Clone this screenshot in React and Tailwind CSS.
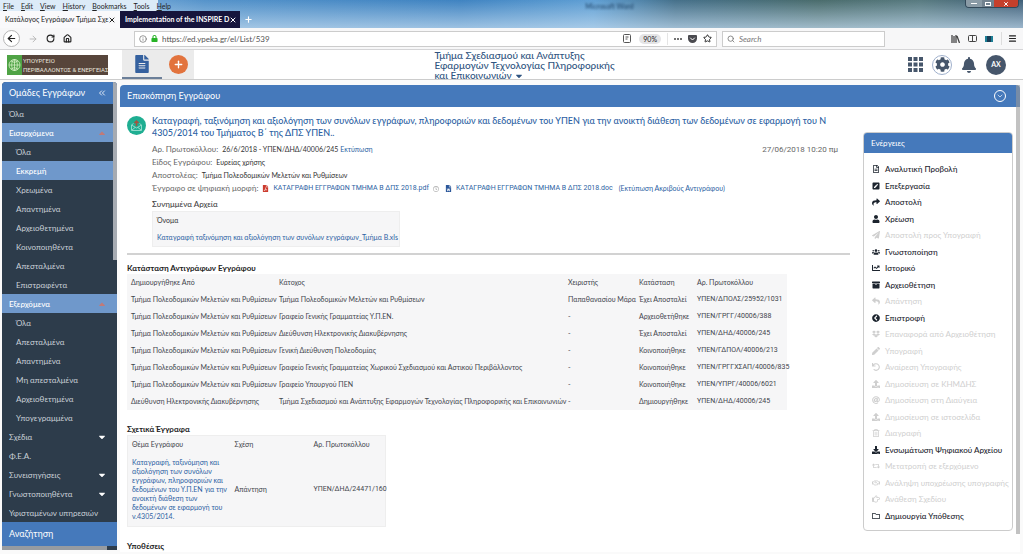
import React, { useState } from "react";
import {
  FaArchive,
  FaBell,
  FaChartLine,
  FaChevronCircleLeft,
  FaCog,
  FaDownload,
  FaDropbox,
  FaFileAlt,
  FaFilePdf,
  FaFileWord,
  FaLock,
  FaPaperPlane,
  FaPen,
  FaPenSquare,
  FaRegClock,
  FaRegFileAlt,
  FaRegFolder,
  FaRegHandPointRight,
  FaRegHandshake,
  FaRegTrashAlt,
  FaReply,
  FaRetweet,
  FaShare,
  FaUndo,
  FaUpload,
  FaUser,
  FaUsers,
  FaAt,
  FaCaretDown,
  FaCaretUp,
} from "react-icons/fa";
import {
  ArrowLeft,
  ArrowRight,
  ChevronsLeft,
  ChevronDown,
  House,
  Info,
  Menu,
  Plus,
  RotateCw,
  Search,
  Star,
  X,
} from "lucide-react";

const menus = ["File", "Edit", "View", "History", "Bookmarks", "Tools", "Help"];

const groups = [
  { label: "Όλα" },
  { label: "Εισερχόμενα", open: true },
  { label: "Όλα", child: true },
  { label: "Εκκρεμή", child: true, active: true },
  { label: "Χρεωμένα", child: true },
  { label: "Απαντημένα", child: true },
  { label: "Αρχειοθετημένα", child: true },
  { label: "Κοινοποιηθέντα", child: true },
  { label: "Απεσταλμένα", child: true },
  { label: "Επιστραφέντα", child: true },
  { label: "Εξερχόμενα", open: true },
  { label: "Όλα", child: true },
  { label: "Απεσταλμένα", child: true },
  { label: "Απαντημένα", child: true },
  { label: "Μη απεσταλμένα", child: true },
  { label: "Αρχειοθετημένα", child: true },
  { label: "Υπογεγραμμένα", child: true },
  { label: "Σχέδια", closed: true },
  { label: "Φ.Ε.Α." },
  { label: "Συνεισηγήσεις", closed: true },
  { label: "Γνωστοποιηθέντα", closed: true },
  { label: "Υφισταμένων υπηρεσιών" },
];

const planning = "Τμήμα Πολεοδομικών Μελετών και Ρυθμίσεων";

const copies = [
  [planning, planning, "Παπαθανασίου Μάρα", "Έχει Αποσταλεί", "ΥΠΕΝ/ΔΠΟΛΣ/25952/1031"],
  [planning, "Γραφείο Γενικής Γραμματείας Υ.Π.ΕΝ.", "-", "Αρχειοθετήθηκε", "ΥΠΕΝ/ΓΡΓΓ/40006/388"],
  [planning, "Διεύθυνση Ηλεκτρονικής Διακυβέρνησης", "-", "Έχει Αποσταλεί", "ΥΠΕΝ/ΔΗΔ/40006/245"],
  [planning, "Γενική Διεύθυνση Πολεοδομίας", "-", "Κοινοποιήθηκε", "ΥΠΕΝ/ΓΔΠΟΛ/40006/213"],
  [planning, "Γραφείο Γενικής Γραμματείας Χωρικού Σχεδιασμού και Αστικού Περιβάλλοντος", "-", "Κοινοποιήθηκε", "ΥΠΕΝ/ΓΡΓΓΧΣΑΠ/40006/835"],
  [planning, "Γραφείο Υπουργού ΠΕΝ", "-", "Κοινοποιήθηκε", "ΥΠΕΝ/ΥΠΡΓ/40006/6021"],
  ["Διεύθυνση Ηλεκτρονικής Διακυβέρνησης", "Τμήμα Σχεδιασμού και Ανάπτυξης Εφαρμογών Τεχνολογίας Πληροφορικής και Επικοινωνιών", "-", "Δημιουργήθηκε", "ΥΠΕΝ/ΔΗΔ/40006/245"],
];

const actions = [
  { label: "Αναλυτική Προβολή", icon: FaRegFileAlt, on: true },
  { label: "Επεξεργασία", icon: FaPenSquare, on: true },
  { label: "Αποστολή", icon: FaShare, on: true },
  { label: "Χρέωση", icon: FaUser, on: true },
  { label: "Αποστολή προς Υπογραφή", icon: FaPaperPlane },
  { label: "Γνωστοποίηση", icon: FaUsers, on: true },
  { label: "Ιστορικό", icon: FaChartLine, on: true },
  { label: "Αρχειοθέτηση", icon: FaArchive, on: true },
  { label: "Απάντηση", icon: FaReply },
  { label: "Επιστροφή", icon: FaChevronCircleLeft, on: true },
  { label: "Επαναφορά από Αρχειοθέτηση", icon: FaDropbox },
  { label: "Υπογραφή", icon: FaPen },
  { label: "Αναίρεση Υπογραφής", icon: FaUndo },
  { label: "Δημοσίευση σε ΚΗΜΔΗΣ", icon: FaUpload },
  { label: "Δημοσίευση στη Διαύγεια", icon: FaAt },
  { label: "Δημοσίευση σε ιστοσελίδα", icon: FaUpload },
  { label: "Διαγραφή", icon: FaRegTrashAlt },
  { label: "Ενσωμάτωση Ψηφιακού Αρχείου", icon: FaDownload, on: true },
  { label: "Μετατροπή σε εξερχόμενο", icon: FaRetweet },
  { label: "Ανάληψη υποχρέωσης υπογραφής", icon: FaRegHandshake },
  { label: "Ανάθεση Σχεδίου", icon: FaRegHandPointRight },
  { label: "Δημιουργία Υπόθεσης", icon: FaRegFolder, on: true },
];

const BrowserChrome = () => {
  const [query, setQuery] = useState("");
  const [url, setUrl] = useState("https://ed.ypeka.gr/el/List/539");

  return (
    <div className="text-[7px] text-[#222]">
      <div className="bg-[linear-gradient(90deg,#a9cdee_0%,#5593ca_20%,#3f83c1_45%,#5f9fd4_58%,#45708a_66%,#4a6c6c_80%,#587a80_90%,#3f5f78_100%)]">
        <div className="bg-linear-to-b from-transparent to-[#c4dcf0]/70">
          <div className="flex h-[11px] items-start justify-between">
            <nav className="flex h-[11px] w-[158px] items-center gap-[7px] bg-[#dcebf8] pl-[3px] leading-[10px] whitespace-nowrap">
              {menus.map((m) => (
                <button key={m}>
                  <u>{m[0]}</u>
                  {m.slice(1)}
                </button>
              ))}
            </nav>
            <span className="pl-24 leading-[12px] text-[#1f4468] blur-[1px]">Microsoft Word</span>
            <div className="mr-1 flex h-2 w-[54px] overflow-hidden rounded-b-sm border border-t-0 border-[#33495a] text-white">
              <button aria-label="Minimize" className="flex w-4 items-center justify-center bg-[#8a9ba6]">
                <span className="h-px w-1.5 bg-white" />
              </button>
              <button aria-label="Restore" className="flex w-3 items-center justify-center bg-[#71828f]">
                <span className="h-1 w-1.5 border border-white" />
              </button>
              <button aria-label="Close" className="flex flex-1 items-center justify-center bg-[#c5402c]">
                <X size={6} strokeWidth={4} />
              </button>
            </div>
          </div>
          <div className="flex h-[17px] items-stretch">
            <div className="flex w-[120px] items-center justify-between bg-[#f9f9fb] pr-1 pl-[5px] whitespace-nowrap">
              <span>Κατάλογος Εγγράφων Τμήμα Σχε</span>
              <button aria-label="Close tab">
                <X size={8} strokeWidth={3} />
              </button>
            </div>
            <div className="flex w-[120px] items-center justify-between bg-[#16153c] pr-1 pl-[5px] font-bold whitespace-nowrap text-white">
              <span>Implementation of the INSPIRE D</span>
              <button aria-label="Close tab">
                <X size={8} strokeWidth={3} />
              </button>
            </div>
            <button aria-label="New tab" className="px-1 text-white">
              <Plus size={9} strokeWidth={3} />
            </button>
          </div>
        </div>
      </div>

      <div className="flex h-[22px] items-center border-b border-[#d5d5d7] bg-[#f7f7f8] pr-1.5 pl-[3px]">
        <div className="flex w-[131px] items-center gap-2">
          <button aria-label="Back" className="flex size-[17px] items-center justify-center rounded-full border border-[#b5b5b5] bg-white">
            <ArrowLeft size={11} strokeWidth={2.5} />
          </button>
          <button aria-label="Forward" className="text-[#b0b0b0]">
            <ArrowRight size={10} />
          </button>
          <button aria-label="Reload">
            <RotateCw size={9} strokeWidth={3} />
          </button>
          <button aria-label="Home">
            <House size={9} strokeWidth={3} />
          </button>
        </div>
        <div className="flex h-4 flex-1 items-center border border-[#ccc] bg-white px-1">
          <Info size={8} className="text-[#666]" />
          <FaLock size={7} className="ml-1 text-[#27b327]" />
          <input
            aria-label="Address"
            value={url}
            onChange={(e) => setUrl(e.target.value)}
            className="ml-1 min-w-0 flex-1 text-[8px] text-[#555] outline-none"
          />
          <svg width="8" height="9" viewBox="0 0 8 9" fill="none" stroke="#555">
            <rect x=".5" y=".5" width="7" height="8" rx="1" />
            <path d="M2.5 3h3M2.5 5h2" />
          </svg>
          <button className="ml-2 h-2.5 rounded-full bg-[#e4e4e6] px-1 leading-[10px]">90%</button>
          <span className="mx-1.5 h-3 w-px bg-[#e5e5e5]" />
          <button aria-label="Page actions" className="flex gap-px">
            <span className="size-0.5 rounded-full bg-[#444]" />
            <span className="size-0.5 rounded-full bg-[#444]" />
            <span className="size-0.5 rounded-full bg-[#444]" />
          </button>
          <button aria-label="Save to Pocket" className="ml-1.5">
            <svg width="9" height="8" viewBox="0 0 18 16">
              <path d="M2 0h14a2 2 0 0 1 2 2v5a9 9 0 0 1-18 0V2a2 2 0 0 1 2-2z" fill="#4a4a4f" />
              <path d="M5 6l4 4 4-4" fill="none" stroke="#fff" strokeWidth="2" strokeLinecap="round" />
            </svg>
          </button>
          <button aria-label="Bookmark" className="ml-1.5">
            <Star size={9} strokeWidth={2.5} />
          </button>
        </div>
        <label className="ml-[5px] flex h-4 w-[163px] items-center border border-[#ccc] bg-white px-1">
          <Search size={8} strokeWidth={2.5} className="text-[#777]" />
          <input
            aria-label="Search"
            placeholder="Search"
            value={query}
            onChange={(e) => setQuery(e.target.value)}
            className="ml-1 min-w-0 flex-1 text-[8px] italic outline-none placeholder:text-[#777]"
          />
        </label>
        <div className="ml-[66px] flex items-center gap-2">
          <button aria-label="Library">
            <svg width="9" height="8" viewBox="0 0 9 8" stroke="#444" strokeWidth="1.3">
              <path d="M1 0v8M3 1v7M5 0v8M6 1l2.5 7" />
            </svg>
          </button>
          <button aria-label="Sidebars">
            <svg width="9" height="7" viewBox="0 0 9 7" fill="none" stroke="#444">
              <rect x=".5" y=".5" width="8" height="6" rx="1" />
              <path d="M4.5 1v5" />
            </svg>
          </button>
          <button aria-label="Reader" className="flex h-1.5 w-2 justify-center bg-[#1d7f96]">
            <span className="h-1.5 w-1 bg-[#173c55]" />
          </button>
          <button aria-label="Menu" className="border-l border-[#ddd] py-0.5 pl-1.5">
            <Menu size={9} strokeWidth={3} />
          </button>
        </div>
      </div>
    </div>
  );
};

const AppHeader = () => (
  <header className="flex h-[30px] items-stretch border-b border-[#ccc] bg-white">
    <div className="flex w-[122px] items-center pl-[7px]">
      <a href="#" className="flex h-5 w-[101px] items-center bg-[#57453b] text-[6px] leading-[9px] text-[#e8e4de]">
        <svg width="15" height="20" viewBox="0 0 15 20" className="shrink-0">
          <rect width="15" height="20" fill="#4fa345" />
          <g fill="none" stroke="#d3efc3" strokeWidth=".8">
            <circle cx="7.5" cy="10" r="5.5" />
            <path d="M7.5 4v12M2 10h11M4 6q3.5 3 7 0M4 14q3.5-3 7 0" />
            <ellipse cx="7.5" cy="10" rx="2.8" ry="5.5" />
          </g>
        </svg>
        <span className="ml-px font-['Roboto',sans-serif] whitespace-nowrap">
          ΥΠΟΥΡΓΕΙΟ
          <br />
          ΠΕΡΙΒΑΛΛΟΝΤΟΣ & ΕΝΕΡΓΕΙΑΣ
        </span>
      </a>
    </div>
    <div className="flex w-[72px] bg-[#ebebeb]">
      <button aria-label="Έγγραφα" className="flex w-10 items-center justify-center border-b-2 border-[#6b7f99] text-[#35619f]">
        <FaFileAlt size={18} />
      </button>
      <button aria-label="Νέο" className="flex flex-1 items-center justify-center">
        <span className="flex size-[19px] items-center justify-center rounded-full bg-[#e2733d] text-white">
          <Plus size={11} strokeWidth={3} />
        </span>
      </button>
    </div>
    <div className="flex flex-1 justify-center">
      <button className="mr-12 text-left text-[10px] leading-[10px] font-medium whitespace-nowrap text-[#2f5480]">
        Τμήμα Σχεδιασμού και Ανάπτυξης
        <br />
        Εφαρμογών Τεχνολογίας Πληροφορικής
        <br />
        και Επικοινωνιών <FaCaretDown className="inline" size={10} />
      </button>
    </div>
    <div className="flex w-[120px] items-center justify-end gap-[9px] pr-[17px] text-[#46566b]">
      <button aria-label="Εφαρμογές">
        <svg width="15" height="15" viewBox="0 0 15 15" fill="currentColor">
          <path d="M0 0h4v4H0zM5.5 0h4v4h-4zM11 0h4v4h-4zM0 5.5h4v4H0zM5.5 5.5h4v4h-4zM11 5.5h4v4h-4zM0 11h4v4H0zM5.5 11h4v4h-4zM11 11h4v4h-4z" />
        </svg>
      </button>
      <button aria-label="Ρυθμίσεις" className="flex size-5 shrink-0 items-center justify-center rounded-full border border-[#9fb0cc]">
        <FaCog size={15} />
      </button>
      <button aria-label="Ειδοποιήσεις">
        <FaBell size={16} />
      </button>
      <button className="size-5 shrink-0 rounded-full bg-[#46566b] text-[7px] font-bold text-white">ΑΧ</button>
    </div>
  </header>
);

const Sidebar = () => {
  const rowStyle = (g) => {
    if (g.active) return "bg-[#6f98cb] pl-[14px] text-white font-medium";
    if (g.open) return "bg-[#6f98cb] pl-[7px] text-white font-medium";
    return g.child ? "pl-[14px]" : "pl-[7px]";
  };

  return (
    <aside className="relative w-[115px] shrink-0 overflow-hidden rounded-t-sm bg-[#2d3c4b] text-[8px] text-[#c9d0d7]">
      <div className="flex h-[22px] items-center justify-between bg-[#4579bb] pr-2.5 pl-[7px] text-[9px] text-white">
        <h2>Ομάδες Εγγράφων</h2>
        <button aria-label="Σύμπτυξη">
          <ChevronsLeft size={10} />
        </button>
      </div>
      <ul>
        {groups.map((g, i) => (
          <li key={i}>
            <button className={`flex h-[19px] w-full items-center justify-between pr-2.5 whitespace-nowrap ${rowStyle(g)}`}>
              {g.label}
              {g.open && <FaCaretUp size={10} className="text-[#c07a78]" />}
              {g.closed && <FaCaretDown size={10} className="text-white" />}
            </button>
          </li>
        ))}
      </ul>
      <button className="block h-6 w-full bg-[#4579bb] pl-[7px] text-left text-[9px] text-white">Αναζήτηση</button>
      <div className="h-1 w-[105px] bg-[#969ba1]" />
      {/* scroll thumb over the list */}
      <div className="absolute top-0 right-0 h-[178px] w-1 bg-[#a5aab1]" />
    </aside>
  );
};

const DocumentDetails = () => (
  <section className="flex border-b-2 border-[#d2d2d2] pb-[6px]">
    <span className="mt-[9px] mr-1.5 flex size-[19px] shrink-0 items-center justify-center rounded-full bg-[#1fae92]">
      <svg width="13" height="13" viewBox="0 0 13 13" fill="none" stroke="#8fdccb">
        <path d="M1.5 6v5.500h10V6L9.500 4.500M3.500 4.500L1.500 6l5 3 5-3M2 11l3-2.500M11 11L8 8.500" />
        <path d="M6.500 7V2M4.500 4l2-2 2 2" stroke="#a5543f" strokeWidth="1.500" />
      </svg>
    </span>
    <div className="min-w-0 flex-1">
      <h2 className="pt-2 text-[9px] leading-3 font-medium text-[#2c5fa3]">
        Καταγραφή, ταξινόμηση και αξιολόγηση των συνόλων εγγράφων, πληροφοριών και δεδομένων του ΥΠΕΝ για την ανοικτή διάθεση των δεδομένων σε εφαρμογή του Ν
        <br />
        4305/2014 του Τμήματος Β΄ της ΔΠΣ ΥΠΕΝ..
      </h2>
      <div className="mt-1 flex items-center justify-between pr-3 text-[8px] leading-[13px] text-[#666]">
        <p>
          Αρ. Πρωτοκόλλου:
          <span className="ml-1 text-[7px] text-[#333]">
            26/6/2018 - ΥΠΕΝ/ΔΗΔ/40006/245 <a href="#" className="text-[#2c5fa3]">Εκτύπωση</a>
          </span>
        </p>
        <time className="font-['Roboto',sans-serif]">27/06/2018 10:20 πμ</time>
      </div>
      <p className="text-[8px] leading-[13px] text-[#666]">
        Είδος Εγγράφου:<span className="ml-1 text-[7px] text-[#333]">Ευρείας χρήσης</span>
      </p>
      <p className="text-[8px] leading-[13px] text-[#666]">
        Αποστολέας:<span className="ml-1 text-[7px] text-[#333]">{planning}</span>
      </p>
      <div className="flex items-center text-[8px] leading-[13px] whitespace-nowrap text-[#666]">
        Έγγραφο σε ψηφιακή μορφή:
        <FaFilePdf size={7} className="ml-1 text-[#cc3b2e]" />
        <a href="#" className="ml-1 font-['Roboto',sans-serif] text-[7px] text-[#2c5fa3]">
          ΚΑΤΑΓΡΑΦΗ ΕΓΓΡΑΦΩΝ ΤΜΗΜΑ Β ΔΠΣ 2018.pdf
        </a>
        <FaRegClock size={6} className="ml-1 text-[#aaa]" />
        <FaFileWord size={7} className="ml-1.5 text-[#2b579a]" />
        <a href="#" className="ml-1 font-['Roboto',sans-serif] text-[7px] text-[#2c5fa3]">
          ΚΑΤΑΓΡΑΦΗ ΕΓΓΡΑΦΩΝ ΤΜΗΜΑ Β ΔΠΣ 2018.doc
        </a>
        <a href="#" className="ml-1.5 text-[7px] text-[#2c5fa3]">
          (Εκτύπωση Ακριβούς Αντιγράφου)
        </a>
      </div>
      <h3 className="mt-1 text-[8px] leading-[10px] font-medium text-[#444]">Συνημμένα Αρχεία</h3>
      <table className="mt-0.5 w-[248px] border border-[#eee] bg-[#f6f6f7] text-left text-[7px] leading-[17px] text-[#333]">
        <thead>
          <tr>
            <th className="pl-1 font-normal">Όνομα</th>
          </tr>
        </thead>
        <tbody>
          <tr>
            <td className="pl-1 whitespace-nowrap">
              <a href="#" className="text-[#2c5fa3]">
                Καταγραφή ταξινόμηση και αξιολόγηση των συνόλων εγγράφων_Τμήμα Β.xls
              </a>
            </td>
          </tr>
        </tbody>
      </table>
    </div>
  </section>
);

const CopiesTable = () => (
  <section className="mt-[7px]">
    <h3 className="text-[8px] leading-3 font-bold text-[#222]">Κατάσταση Αντιγράφων Εγγράφου</h3>
    <table className="w-[660px] table-fixed bg-[#f6f6f7] text-left text-[7px] leading-[17px] whitespace-nowrap text-[#3f444c]">
      <colgroup>
        <col className="w-[148px]" />
        <col className="w-[289px]" />
        <col className="w-[71px]" />
        <col className="w-[58px]" />
        <col />
      </colgroup>
      <thead>
        <tr>
          {["Δημιουργήθηκε Από", "Κάτοχος", "Χειριστής", "Κατάσταση", "Αρ. Πρωτοκόλλου"].map((h) => (
            <th key={h} className="pl-1 font-normal">{h}</th>
          ))}
        </tr>
      </thead>
      <tbody>
        {copies.map((row, i) => (
          <tr key={i}>
            {row.map((cell, j) => (
              <td key={j} className="pl-1 last:font-['Roboto',sans-serif]">{cell}</td>
            ))}
          </tr>
        ))}
      </tbody>
    </table>
  </section>
);

const RelatedTable = () => (
  <section className="mt-[13px]">
    <h3 className="text-[8px] leading-3 font-bold text-[#222]">Σχετικά Έγγραφα</h3>
    <table className="w-[259px] table-fixed border border-[#eee] bg-[#f6f6f7] text-left text-[7px] leading-[17px] whitespace-nowrap text-[#3f444c]">
      <colgroup>
        <col className="w-[103px]" />
        <col className="w-[79px]" />
        <col />
      </colgroup>
      <thead>
        <tr>
          <th className="pl-1 font-normal">Θέμα Εγγράφου</th>
          <th className="pl-1 font-normal">Σχέση</th>
          <th className="pl-1 font-normal">Αρ. Πρωτοκόλλου</th>
        </tr>
      </thead>
      <tbody>
        <tr>
          <td className="py-[5px] pl-1 leading-[9px]">
            <a href="#" className="text-[#2c5fa3]">
              Καταγραφή, ταξινόμηση και
              <br />
              αξιολόγηση των συνόλων
              <br />
              εγγράφων, πληροφοριών και
              <br />
              δεδομένων του Υ.Π.ΕΝ για την
              <br />
              ανοικτή διάθεση των
              <br />
              δεδομένων σε εφαρμογή του
              <br />
              ν.4305/2014.
            </a>
          </td>
          <td className="pl-1">Απάντηση</td>
          <td className="pl-1 font-['Roboto',sans-serif]">ΥΠΕΝ/ΔΗΔ/24471/160</td>
        </tr>
      </tbody>
    </table>
  </section>
);

const ActionsPanel = () => (
  <aside className="mt-[25px] w-[150px] shrink-0 self-start overflow-hidden rounded-sm border border-[#ccc] bg-white">
    <h2 className="bg-[#4579bb] pl-[7px] text-[8px] leading-[20px] text-white">Ενέργειες</h2>
    <ul className="pt-2 pb-[6px]">
      {actions.map(({ label, icon: Icon, on }) => (
        <li key={label} className="odd:h-4 even:h-[17px]">
          <button
            disabled={!on}
            className="flex h-full w-full items-center gap-[5px] pl-2 text-[8px] font-medium whitespace-nowrap text-[#1c242e] disabled:font-normal disabled:text-[#cfcfcf]"
          >
            <Icon size={8} className="shrink-0" />
            {label}
          </button>
        </li>
      ))}
    </ul>
  </aside>
);

const App = () => {
  return (
    <div className="bg-white font-['Lato','Noto_Sans',sans-serif]">
      <BrowserChrome />
      <AppHeader />
      <div className="flex items-start bg-[#fafafa] pt-0.5 pr-[3px] pb-1 pl-0.5">
        <Sidebar />
        <main className="relative mt-[3px] ml-[3px] min-w-0 flex-1 bg-white">
          <div className="flex h-[22px] items-center justify-between rounded-t-sm bg-[#4579bb] pr-[14px] pl-[7px] text-[9px] text-white">
            <h1>Επισκόπηση Εγγράφου</h1>
            <button aria-label="Σύμπτυξη" className="flex size-3 items-center justify-center rounded-full border border-white">
              <ChevronDown size={8} />
            </button>
          </div>
          <div className="flex gap-[13px] pr-[7px] pl-[7px]">
            <div className="min-w-0 flex-1">
              <DocumentDetails />
              <CopiesTable />
              <RelatedTable />
              <h3 className="mt-[13px] text-[8px] leading-3 font-bold text-[#222]">Υποθέσεις</h3>
            </div>
            <ActionsPanel />
          </div>
          <div className="absolute top-0 right-0 h-[449px] w-1 bg-[#999]/60" />
        </main>
      </div>
    </div>
  );
};

export default App;
